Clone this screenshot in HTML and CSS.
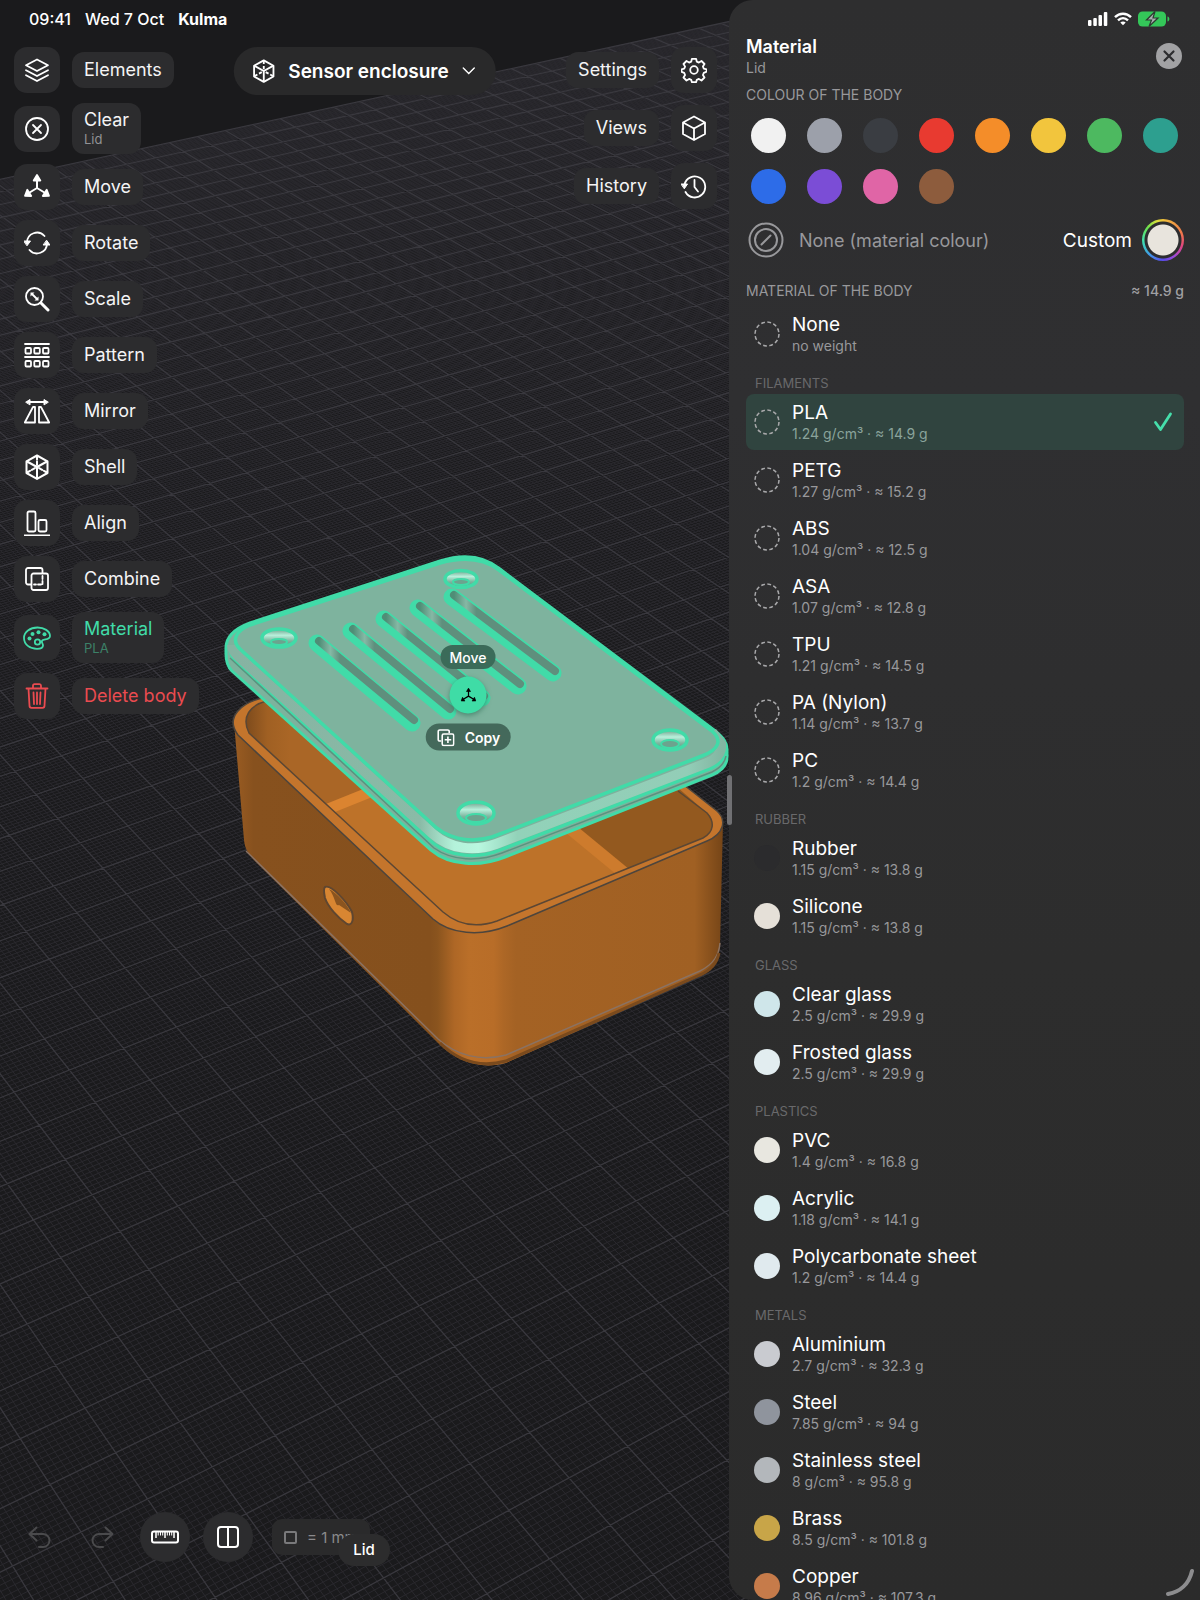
FILE: index.html
```html
<!DOCTYPE html>
<html lang="en">
<head>
<meta charset="utf-8">
<meta name="viewport" content="width=device-width, initial-scale=1">
<title>Kulma – Sensor enclosure</title>
<link rel="stylesheet" href="styles.css">
</head>
<body>
<svg class="defs" aria-hidden="true">
  <symbol id="i-move" viewBox="0 0 26 26"><path d="M13 14V5M13 14l-9 5.500M13 14l9 5.500" fill="none" stroke="currentColor" stroke-width="2"/><path d="M13 1l3.300 5.500H9.700zM1 21.800l2.300-6 3.900 6.200zM25 21.800l-2.300-6-3.900 6.200z" fill="currentColor" stroke="currentColor" stroke-linejoin="round"/></symbol>
  <symbol id="i-shell" viewBox="0 0 26 26"><g fill="none" stroke="currentColor" stroke-width="2" stroke-linejoin="round"><path d="M13 1.500l10.500 5.800v11.700L13 24.800 2.500 19V7.300z"/><path d="M13 13v11.500M13 13L3 7.500M13 13l10-5.500"/><path d="M13 2v11M3 18.500l10-5.500M23 18.500L13 13" stroke-dasharray="3.500 2"/></g></symbol>
</svg>

<div class="app">
  <svg class="scene" viewBox="0 0 1200 1600" preserveAspectRatio="xMinYMid slice" role="img" aria-label="Sensor enclosure with a lifted lid">
    <defs>
      <linearGradient id="body" gradientUnits="userSpaceOnUse" x1="234" y1="0" x2="724" y2="0">
        <stop offset="0" stop-color="#9a5c22"/><stop offset=".04" stop-color="#87511e"/><stop offset=".4" stop-color="#85501d"/><stop offset=".415" stop-color="#8a541e"/><stop offset=".45" stop-color="#ae6726"/><stop offset=".48" stop-color="#ba6f29"/><stop offset=".53" stop-color="#b86d28"/><stop offset=".55" stop-color="#ad6726"/><stop offset=".575" stop-color="#a46224"/><stop offset=".94" stop-color="#a06023"/><stop offset=".97" stop-color="#8a521d"/><stop offset="1" stop-color="#744417"/>
      </linearGradient>
      <linearGradient id="inner" gradientUnits="userSpaceOnUse" x1="245" y1="0" x2="290" y2="0">
        <stop offset="0" stop-color="#7c4a1c"/><stop offset=".5" stop-color="#a06023"/><stop offset="1" stop-color="#aa6626"/>
      </linearGradient>
      <linearGradient id="bevel" gradientUnits="userSpaceOnUse" x1="235" y1="0" x2="722" y2="0">
        <stop offset="0" stop-color="#86b3a2"/><stop offset=".38" stop-color="#8abba7"/><stop offset=".45" stop-color="#b4f2da"/><stop offset=".5" stop-color="#b9f7df"/><stop offset=".58" stop-color="#92d2b9"/><stop offset=".93" stop-color="#93cdb7"/><stop offset="1" stop-color="#83b6a2"/>
      </linearGradient>
      <linearGradient id="sink" x1="0" y1="0" x2="0" y2="1">
        <stop offset="0" stop-color="#6f9f8b"/><stop offset=".35" stop-color="#b8f0db"/><stop offset=".65" stop-color="#7fb7a1"/><stop offset="1" stop-color="#5c8f7b"/>
      </linearGradient>
      <linearGradient id="slot" x1="0" y1="0" x2="1" y2="0">
        <stop offset="0" stop-color="#4f8d76"/><stop offset=".12" stop-color="#86b8a5"/><stop offset=".22" stop-color="#5f8f7d"/><stop offset="1" stop-color="#5f8f7d"/>
      </linearGradient>
      <clipPath id="cavity"><path d="M267 701C250 705 241 717 249 733L443 912C458 925 477 928 497 921L703 838C714 832 715 822 707 813L640 755L440 700z"/></clipPath>
    </defs>
    <path id="gridMinor" class="grid-minor"/>
    <path id="gridMajor" class="grid-major"/>

    <path d="M234 722L244 840C245 849 248 853 254 860L438 1043C456 1061 480 1070 506 1063L700 976C714 970 719 960 720 946L723 822L480 760z" fill="url(#body)"/>
    <path d="M246 851L438 1039C456 1055 480 1062 506 1055L700 971C714 964 719 955 720 943" fill="none" stroke="#8b7262" stroke-width="1.500"/>
    <path d="M440 1043C458 1061 480 1068 506 1061L700 975C712 970 717 963 719 953" fill="none" stroke="#7a4a1d" stroke-width="3"/>
    <path d="M267 697C240 702 225 718 238 735L433 919C450 934 480 937 507 926L707 841C724 834 727 820 717 811L660 766L440 700z" fill="#c4752c" stroke="#4d453d" stroke-width="1.500"/>
    <g clip-path="url(#cavity)">
      <path d="M230 690h520v250H230z" fill="#bd7229"/>
      <path d="M230 690h300v40L322 814h-92z" fill="url(#inner)"/>
      <path d="M572 827L634 882L760 830V740H560z" fill="#93591f"/>
      <path d="M318 813L420 772" stroke="#db8430" stroke-width="11"/>
      <path d="M555 816L640 886" stroke="#cd7b2d" stroke-width="12"/>
    </g>
    <path d="M267 701C250 705 241 717 249 733L443 912C458 925 477 928 497 921L703 838C714 832 715 822 707 813L678 791" fill="none" stroke="#5b4734" stroke-width="1.500"/>
    <path d="M325 887C331 884 347 902 352 912C354 920 352 926 347 924C338 918 328 907 325 898C324 893 323 889 325 887z" fill="#d88632" stroke="#5f4630" stroke-width="2"/>
    <path d="M329 889C337 893 347 904 351 913L339 905C335 907 336 898 329 889z" fill="#8a541f"/>

    <path d="M226 648C226 637 234 629 250 623L440 561C462 554 483 555 500 569L714 730C724 738 727 743 727 749V757C727 765 722 771 712 775L505 857C480 867 450 866 431 850L232 671C227 666 226 660 226 654z" fill="#7db29d" stroke="#41dba8" stroke-width="3"/>
    <path d="M230 650C231 656 234 660 238 664L433 843C450 857 478 859 500 850L712 768C720 764 725 758 725 749" fill="none" stroke="#41dba8" stroke-width="3.500"/>
    <path d="M230 658L434 848C452 861 478 862 502 853L712 772C720 768 725 762 726 756" fill="none" stroke="#5a937f" stroke-width="1.500"/>
    <path d="M232 645C232 650 236 654 240 658L433 834C450 849 474 852 496 844L707 763C717 759 722 753 721 744L712 732" fill="none" stroke="url(#bevel)" stroke-width="10"/>
    <path d="M250 625C236 631 231 640 240 649L430 822C445 838 468 844 492 837L702 756C720 749 722 740 712 731L499 570C483 558 462 557 440 563z" fill="#7eb39e" stroke="#41dba8" stroke-width="3.500"/>
    <path d="M317 643L412 723M351 631L448 711M384 619L482 698M418 608L518 686M452 597L553 673" fill="none" stroke="#41dba8" stroke-width="17" stroke-linecap="round"/>
    <g fill="none" stroke="url(#slot)" stroke-width="8" stroke-linecap="round">
      <path d="M319 641L414 720"/><path d="M353 629L450 709"/><path d="M386 617L484 696"/><path d="M420 606L520 684"/><path d="M454 595L555 671"/>
    </g>
    <g stroke="#41dba8" fill="url(#sink)">
      <ellipse cx="279" cy="638" rx="17" ry="9" stroke-width="3.500"/><ellipse cx="461" cy="579" rx="16" ry="8.500" stroke-width="3.500"/><ellipse cx="670" cy="740" rx="17" ry="10" stroke-width="3.500"/><ellipse cx="476" cy="813" rx="18" ry="11" stroke-width="3.500"/>
      <g stroke-width="2" fill="#6ca38e"><ellipse cx="279" cy="642" rx="8" ry="3"/><ellipse cx="461" cy="582" rx="8" ry="3"/><ellipse cx="670" cy="744" rx="9" ry="4"/><ellipse cx="476" cy="818" rx="10" ry="4"/></g>
    </g>
  </svg>

  <header class="status">
    <div class="status-left"><time>09:41</time><span>Wed 7 Oct</span><strong>Kulma</strong></div>
    <div class="status-right">
      <svg width="20" height="14" viewBox="0 0 20 14" fill="#fff" aria-label="Signal"><rect x="0" y="8" width="3.500" height="6" rx="1"/><rect x="5.300" y="6" width="3.500" height="8" rx="1"/><rect x="10.500" y="3" width="3.500" height="11" rx="1"/><rect x="15.800" y="0" width="3.500" height="14" rx="1"/></svg>
      <svg width="18" height="14" viewBox="0 0 18 14" fill="none" stroke="#fff" stroke-width="2.400" aria-label="Wi-Fi"><path d="M1 5.200C5.500.6 12.500.6 17 5.200M4 8.300c3-2.900 7-2.900 10 0"/><path d="M6.300 10.500c1.500-1.400 3.900-1.400 5.400 0L9 13.300z" fill="#fff" stroke="none"/></svg>
      <svg width="32" height="16" viewBox="0 0 32 16" aria-label="Battery charging"><rect y="0.500" width="28" height="15" rx="4.500" fill="#34c759"/><path d="M29.500 5.500c2.500.5 2.500 4.500 0 5z" fill="#34c759"/><path d="M17 .5L8.500 9h5l-2.500 6.500L20 7h-5z" fill="#a9aeb0" stroke="#2c3a30" stroke-width="1.200"/></svg>
    </div>
  </header>

  <main class="stage">
    <nav class="tools" aria-label="Tools">
      <button class="tool"><span class="tile"><svg viewBox="0 0 26 26"><path d="M13 2.500l11 5.700-11 5.800L2 8.200zM2 13.200l11 5.800 11-5.800M2 18.200l11 5.800 11-5.800"/></svg></span><span class="chip">Elements</span></button>
      <button class="tool"><span class="tile"><svg viewBox="0 0 26 26"><circle cx="13" cy="13" r="11"/><path d="M9 9l8 8M17 9l-8 8"/></svg></span><span class="chip tall">Clear<small>Lid</small></span></button>
      <button class="tool"><span class="tile"><svg><use href="#i-move"/></svg></span><span class="chip">Move</span></button>
      <button class="tool"><span class="tile"><svg viewBox="0 0 26 26"><path d="M3 12.500A10 10 0 0 1 20.500 6M23 13.500A10 10 0 0 1 5.500 20"/><path d="M0 11h6.500L3.200 15.500zM19.500 15H26l-3.200-4.500z" fill="currentColor" stroke-width="1"/></svg></span><span class="chip">Rotate</span></button>
      <button class="tool"><span class="tile"><svg viewBox="0 0 26 26"><circle cx="10.500" cy="10.500" r="8.500"/><path d="M17 17l7 7" stroke-width="3"/><path d="M8 8l5 5"/><path d="M6.500 6.500h4l-4 4zM14.500 14.500h-4l4-4z" fill="currentColor" stroke="none"/></svg></span><span class="chip">Scale</span></button>
      <button class="tool"><span class="tile"><svg viewBox="0 0 26 26"><path d="M1 2h24M1 15h24"/><rect x="1.500" y="6" width="5.500" height="5.500" rx="1"/><rect x="10.300" y="6" width="5.500" height="5.500" rx="1"/><rect x="19" y="6" width="5.500" height="5.500" rx="1"/><rect x="1.500" y="19" width="5.500" height="5.500" rx="1"/><rect x="10.300" y="19" width="5.500" height="5.500" rx="1"/><rect x="19" y="19" width="5.500" height="5.500" rx="1"/></svg></span><span class="chip">Pattern</span></button>
      <button class="tool"><span class="tile"><svg viewBox="0 0 26 26"><path d="M11 9v15.500H.8L9 9zM15 9v15.500h10.200L17 9zM4 4h18"/><path d="M2 4l4-2.500v5zM24 4l-4-2.500v5z" fill="currentColor" stroke-width="1"/></svg></span><span class="chip">Mirror</span></button>
      <button class="tool"><span class="tile"><svg><use href="#i-shell"/></svg></span><span class="chip">Shell</span></button>
      <button class="tool"><span class="tile"><svg viewBox="0 0 26 26"><path d="M0 25.500h26"/><rect x="3.500" y="1.500" width="8" height="20" rx="1.500"/><rect x="14.500" y="10" width="8" height="11.500" rx="1.500"/></svg></span><span class="chip">Align</span></button>
      <button class="tool"><span class="tile"><svg viewBox="0 0 26 26"><path d="M7 18.500H4a2 2 0 0 1-2-2V4a2 2 0 0 1 2-2h12.500a2 2 0 0 1 2 2v3"/><rect x="7.500" y="7.500" width="16.500" height="16.500" rx="2"/><path d="M18.500 10v8.500H10" stroke-dasharray="3 2"/></svg></span><span class="chip">Combine</span></button>
      <button class="tool active" aria-pressed="true"><span class="tile"><svg class="wide" viewBox="0 0 28 26"><path d="M14.500 2.500C7 2.500 1 7 1 13c0 6.500 6 10.800 13 10.800 4 0 6-1.300 6-3.300 0-1.800-1.200-2.500-1.200-4 0-3.500 8.200-.5 8.200-5.500 0-5-6-8.500-12.500-8.500z"/><circle cx="14.500" cy="17" r="2.700"/><g fill="currentColor" stroke="none"><circle cx="6.500" cy="13.500" r="2"/><circle cx="9.500" cy="9" r="2"/><circle cx="15.500" cy="7.200" r="2"/><circle cx="21.500" cy="9.300" r="2"/></g></svg></span><span class="chip tall">Material<small>PLA</small></span></button>
      <button class="tool danger"><span class="tile"><svg viewBox="0 0 26 26"><path d="M2.500 5.500h21M9 5V2.800C9 1.800 9.500 1.200 10.500 1.200h5c1 0 1.500.6 1.500 1.600V5M4.500 5.500l1 17.300c0 1.200.8 2 2 2h11c1.200 0 2-.8 2-2l1-17.300M9.500 9.500l.5 11.500M13 9.500V21M16.500 9.500L16 21"/></svg></span><span class="chip">Delete body</span></button>
    </nav>

    <button class="document"><svg width="24" height="24"><use href="#i-shell"/></svg><span>Sensor enclosure</span><svg width="14" height="14" viewBox="0 0 14 14" fill="none" stroke="currentColor" stroke-width="1.400" stroke-linecap="round"><path d="M1.500 4l5.500 5.500L12.500 4"/></svg></button>

    <nav class="tools right" aria-label="Project">
      <button class="tool"><span class="chip">Settings</span><span class="tile"><svg viewBox="0 0 26 26"><circle cx="13" cy="13" r="3.800"/><path d="M10.900 1.800h4.200l.7 2.900 2.100.9 2.600-1.600 3 3-1.600 2.500.9 2.100 2.800.7v2.400l-2.800 1.200-.9 2.100 1.600 2.500-3 3-2.600-1.600-2.100.9-.7 2.400h-4.200l-.7-2.400-2.100-.9-2.600 1.600-3-3 1.600-2.500-.9-2.100L.6 14.900v-2.600l2.600-.6.9-2.100-1.600-2.600 3-3 2.600 1.600 2.100-.9z"/></svg></span></button>
      <button class="tool"><span class="chip">Views</span><span class="tile"><svg viewBox="0 0 26 26"><path d="M13 1.500l11 6v11.500l-11 6-11-6V7.500zM2.500 7.700L13 13.500l10.500-5.800M13 13.500V25"/></svg></span></button>
      <button class="tool"><span class="chip">History</span><span class="tile"><svg viewBox="0 0 26 26"><path d="M3.500 11.500A10.500 10.500 0 1 1 4.500 19M13.500 7v7l3.500 4.500"/><path d="M.3 11h6.200l-3 4.500z" fill="currentColor" stroke-width="1"/></svg></span></button>
    </nav>

    <span class="gizmo-tip">Move</span>
    <button class="gizmo" aria-label="Move body"><svg width="16" height="16"><use href="#i-move"/></svg></button>
    <button class="gizmo-copy"><svg width="18" height="18" viewBox="0 0 18 18" fill="none" stroke="currentColor" stroke-width="1.600"><path d="M4.500 12.500H3a1.500 1.500 0 0 1-1.500-1.500V3A1.500 1.500 0 0 1 3 1.500h8A1.500 1.500 0 0 1 12.500 3v1.500"/><rect x="5.500" y="5.500" width="11.500" height="11.500" rx="1.500"/><path d="M11.200 8v6.500M8 11.200h6.500"/></svg>Copy</button>

    <footer class="dock">
      <button class="ghost" aria-label="Undo" disabled><svg width="24" height="24" viewBox="0 0 24 24"><path d="M8.500 2.500L1.500 9l7 6.500M2 9h13a6.500 6.500 0 0 1 0 13h-4"/></svg></button>
      <button class="ghost" aria-label="Redo" disabled><svg width="24" height="24" viewBox="0 0 24 24"><path d="M15.500 2.500l7 6.500-7 6.500M22 9H9a6.500 6.500 0 0 0 0 13h4"/></svg></button>
      <button class="round" aria-label="Measure"><svg width="28" height="14" viewBox="0 0 28 14" fill="none" stroke="currentColor" stroke-width="2"><rect x="1" y="1.500" width="26" height="11" rx="2"/><path d="M5 2v6M14 2v6M23 2v6" stroke-width="1.500"/><path d="M7.200 2v3.500M9.500 2v3.500M11.700 2v3.500M16.300 2v3.500M18.500 2v3.500M20.700 2v3.500" stroke-width="1"/></svg></button>
      <button class="round" aria-label="Split view"><svg width="24" height="24" viewBox="0 0 24 24" fill="none" stroke="currentColor" stroke-width="2"><rect x="2" y="2" width="20" height="20" rx="3"/><path d="M12 2v20"/></svg></button>
      <div class="unit"><i></i><span>= 1 mm</span><b class="hover-name">Lid</b></div>
    </footer>
  </main>

  <aside class="panel" aria-label="Material">
    <span class="grip"></span>
    <div class="panel-head">
      <div><h1>Material</h1><p>Lid</p></div>
      <button class="close" aria-label="Close"><svg width="26" height="26" viewBox="0 0 26 26" fill="none" stroke="#2c2c2e" stroke-width="2.200" stroke-linecap="round"><path d="M8.500 8.500l9 9M17.500 8.500l-9 9"/></svg></button>
    </div>
    <h2>COLOUR OF THE BODY</h2>
    <div class="swatches" role="radiogroup" aria-label="Colour of the body">
      <input type="radio" name="colour" aria-label="White" class="c-white"><input type="radio" name="colour" aria-label="Grey" class="c-grey"><input type="radio" name="colour" aria-label="Graphite" class="c-graphite"><input type="radio" name="colour" aria-label="Red" class="c-red"><input type="radio" name="colour" aria-label="Orange" class="c-orange"><input type="radio" name="colour" aria-label="Yellow" class="c-yellow"><input type="radio" name="colour" aria-label="Green" class="c-green"><input type="radio" name="colour" aria-label="Teal" class="c-teal"><input type="radio" name="colour" aria-label="Blue" class="c-blue"><input type="radio" name="colour" aria-label="Violet" class="c-violet"><input type="radio" name="colour" aria-label="Pink" class="c-pink"><input type="radio" name="colour" aria-label="Brown" class="c-brown">
    </div>
    <div class="colour-row">
      <button class="no-colour"><svg width="36" height="36" viewBox="0 0 36 36" fill="none" stroke="currentColor" stroke-width="2"><circle cx="18" cy="18" r="16.500"/><circle cx="18" cy="18" r="11"/><path d="M13.500 22.500l9-9" stroke-linecap="round"/></svg>None (material colour)</button>
      <button class="custom">Custom<i></i></button>
    </div>
    <div class="section"><h2>MATERIAL OF THE BODY</h2><output>≈ 14.9 g</output></div>
    <div class="materials">
      <label class="mat"><input type="radio" name="mat"><span>None<small>no weight</small></span></label>
      <h3>FILAMENTS</h3>
      <label class="mat selected"><input type="radio" name="mat" checked><span>PLA<small>1.24 g/cm³ · ≈ 14.9 g</small></span><svg width="20" height="20" viewBox="0 0 20 20" fill="none" stroke="#46dfab" stroke-width="2.800" stroke-linecap="round" stroke-linejoin="round"><path d="M2.500 10.500l5 7L17.500 2"/></svg></label>
      <label class="mat"><input type="radio" name="mat"><span>PETG<small>1.27 g/cm³ · ≈ 15.2 g</small></span></label>
      <label class="mat"><input type="radio" name="mat"><span>ABS<small>1.04 g/cm³ · ≈ 12.5 g</small></span></label>
      <label class="mat"><input type="radio" name="mat"><span>ASA<small>1.07 g/cm³ · ≈ 12.8 g</small></span></label>
      <label class="mat"><input type="radio" name="mat"><span>TPU<small>1.21 g/cm³ · ≈ 14.5 g</small></span></label>
      <label class="mat"><input type="radio" name="mat"><span>PA (Nylon)<small>1.14 g/cm³ · ≈ 13.7 g</small></span></label>
      <label class="mat"><input type="radio" name="mat"><span>PC<small>1.2 g/cm³ · ≈ 14.4 g</small></span></label>
      <h3>RUBBER</h3>
      <label class="mat"><input type="radio" name="mat" class="m-rubber"><span>Rubber<small>1.15 g/cm³ · ≈ 13.8 g</small></span></label>
      <label class="mat"><input type="radio" name="mat" class="m-silicone"><span>Silicone<small>1.15 g/cm³ · ≈ 13.8 g</small></span></label>
      <h3>GLASS</h3>
      <label class="mat"><input type="radio" name="mat" class="m-glass"><span>Clear glass<small>2.5 g/cm³ · ≈ 29.9 g</small></span></label>
      <label class="mat"><input type="radio" name="mat" class="m-frosted"><span>Frosted glass<small>2.5 g/cm³ · ≈ 29.9 g</small></span></label>
      <h3>PLASTICS</h3>
      <label class="mat"><input type="radio" name="mat" class="m-pvc"><span>PVC<small>1.4 g/cm³ · ≈ 16.8 g</small></span></label>
      <label class="mat"><input type="radio" name="mat" class="m-acrylic"><span>Acrylic<small>1.18 g/cm³ · ≈ 14.1 g</small></span></label>
      <label class="mat"><input type="radio" name="mat" class="m-poly"><span>Polycarbonate sheet<small>1.2 g/cm³ · ≈ 14.4 g</small></span></label>
      <h3>METALS</h3>
      <label class="mat"><input type="radio" name="mat" class="m-aluminium"><span>Aluminium<small>2.7 g/cm³ · ≈ 32.3 g</small></span></label>
      <label class="mat"><input type="radio" name="mat" class="m-steel"><span>Steel<small>7.85 g/cm³ · ≈ 94 g</small></span></label>
      <label class="mat"><input type="radio" name="mat" class="m-stainless"><span>Stainless steel<small>8 g/cm³ · ≈ 95.8 g</small></span></label>
      <label class="mat"><input type="radio" name="mat" class="m-brass"><span>Brass<small>8.5 g/cm³ · ≈ 101.8 g</small></span></label>
      <label class="mat"><input type="radio" name="mat" class="m-copper"><span>Copper<small>8.96 g/cm³ · ≈ 107.3 g</small></span></label>
    </div>
    <svg class="resize" width="30" height="30" viewBox="0 0 30 30" fill="none" stroke="#8d8d8f" stroke-width="4" stroke-linecap="round" aria-hidden="true"><path d="M2 26C14 24 23 16 26 3"/></svg>
  </aside>
</div>
<script src="grid.js"></script>
</body>
</html>
```
FILE: styles.css
```css
* { box-sizing: border-box; }
body { margin: 0; background: #1a1a1c; color: #fff; font-family: Inter, "Liberation Sans", sans-serif; font-size: 18px; }
button { border: 0; padding: 0; margin: 0; background: none; color: inherit; font: inherit; cursor: pointer; }
h1, h2, h3, p { margin: 0; font-weight: 400; }
small { display: block; }
.defs { position: absolute; width: 0; height: 0; }

.app { position: relative; display: flex; height: 100vh; overflow: hidden; }
.scene { position: absolute; inset: 0; width: 100%; height: 100%; }
.grid-minor { fill: none; stroke: #2a292e; stroke-width: 1; }
.grid-major { fill: none; stroke: #39383e; stroke-width: 1.3; }

.status { position: absolute; inset: 0 0 auto 0; z-index: 3; display: flex; justify-content: space-between; align-items: center; height: 37px; padding: 0 30px 0 29px; font-size: 16px; pointer-events: none; }
.status-left { display: flex; gap: 14px; }
.status-left time, .status-left span { font-weight: 500; }
.status-right { display: flex; align-items: center; gap: 6px; }

.stage { position: relative; flex: 1; min-width: 0; display: flex; justify-content: space-between; align-items: flex-start; padding: 47px 12px 0 14px; }
.tools { display: flex; flex-direction: column; gap: 10px; align-items: flex-start; }
.tools.right { gap: 12px; align-items: flex-end; }
.tool { display: flex; align-items: center; gap: 12px; line-height: 22px; text-align: left; }
.tile { display: grid; place-items: center; width: 46px; height: 46px; border-radius: 13px; background: #2c2c2e; }
.tile svg { width: 26px; height: 26px; fill: none; stroke: currentColor; stroke-width: 1.8; stroke-linejoin: round; stroke-linecap: round; }
.tile svg.wide { width: 28px; }
.tile use { stroke: none; }
.chip { padding: 7px 12px; border-radius: 12px; background: #2c2c2e; color: #f4f4f5; }
.chip.tall { padding: 6px 12px 7px; }
.chip small { font-size: 13px; line-height: 16px; color: #929295; }
.active, .active .chip { color: #41dba8; }
.active .chip small { color: #3c8168; }
.danger, .danger .chip { color: #ea4b50; }

.document { position: absolute; left: 50%; transform: translateX(-50%); display: flex; align-items: center; gap: 13px; height: 48px; padding: 0 20px 0 18px; border-radius: 24px; background: #29292a; font-size: 19px; font-weight: 600; white-space: nowrap; }

.gizmo-tip, .gizmo, .gizmo-copy { position: absolute; transform: translate(-50%, -50%); left: 468px; display: flex; align-items: center; justify-content: center; border-radius: 20px; }
.gizmo-tip { top: 657px; height: 24px; padding: 0 9px; background: #3b6b59; font-size: 14px; font-weight: 500; }
.gizmo { top: 695px; width: 37px; height: 37px; background: #3fdca6; color: #000; box-shadow: 0 2px 5px #2b6a5499; }
.gizmo-copy { top: 737px; height: 27px; padding: 0 10px 0 11px; gap: 10px; background: #44695b; font-size: 14px; font-weight: 600; }

.dock { position: absolute; left: 28px; bottom: 38px; display: flex; align-items: center; }
.ghost { width: 24px; height: 24px; margin-right: 38px; color: #4a4a4c; }
.ghost svg { display: block; fill: none; stroke: currentColor; stroke-width: 2; stroke-linecap: round; stroke-linejoin: round; }
.ghost + .round { margin-left: -12px; }
.round { display: grid; place-items: center; width: 50px; height: 50px; margin-right: 13px; border-radius: 50%; background: #2c2c2e; }
.unit { position: relative; display: flex; align-items: center; gap: 10px; height: 36px; margin-left: 6px; padding: 0 12px; border-radius: 10px; background: #2a2a2b; color: #8a8a8c; font-size: 15px; }
.unit i { width: 13px; height: 13px; border: 2px solid #79797b; border-radius: 2px; }
.hover-name { position: absolute; right: -20px; top: 15px; padding: 0 15px; border-radius: 16px; background: #2c2c2d; color: #fff; font-size: 15px; font-weight: 500; line-height: 32px; }

.panel { position: relative; flex: 0 0 471px; display: flex; flex-direction: column; padding: 34px 16px 0 17px; border-radius: 24px 0 0 24px; background: linear-gradient(#2e2e2f, #2f2f31 25%, #2d2d2d 60%, #2b2b2b); }
.grip { position: absolute; left: -2px; top: calc(50% - 25px); width: 5px; height: 50px; border-radius: 3px; background: #707073; }
.panel-head { display: flex; justify-content: space-between; align-items: center; margin-bottom: 9px; }
h1 { font-size: 18px; font-weight: 600; line-height: 25px; }
.panel-head p { font-size: 14px; line-height: 18px; color: #98989b; }
.close { width: 26px; height: 26px; margin-right: 2px; border-radius: 50%; background: #a2a2a4; }
.close svg { display: block; }
h2 { font-size: 14px; line-height: 18px; color: #98989b; }
.swatches { display: grid; grid-template-columns: repeat(8, 35px); column-gap: 21px; row-gap: 16px; padding: 14px 5px 15px; }
input[type=radio] { appearance: none; margin: 0; border-radius: 50%; }
.swatches input { width: 35px; height: 35px; }
.c-white { background: #f1f1f1; } .c-grey { background: #9ca0aa; } .c-graphite { background: #3a3d42; } .c-red { background: #e83a30; }
.c-orange { background: #f48d29; } .c-yellow { background: #f2c53d; } .c-green { background: #4db960; } .c-teal { background: #2d9f8f; }
.c-blue { background: #2d6ce8; } .c-violet { background: #7b4dd6; } .c-pink { background: #e065a6; } .c-brown { background: #8d5c3d; }
.colour-row { display: flex; justify-content: space-between; align-items: center; }
.no-colour { display: flex; align-items: center; gap: 15px; padding-left: 2px; color: #98989b; }
.custom { display: flex; align-items: center; gap: 10px; font-size: 19px; }
.custom i { width: 42px; height: 42px; border-radius: 50%; background: radial-gradient(circle, #e8e4dd 15px, #2d2d2f 16px 18px, transparent 19px), conic-gradient(#f0c03c, #f0744c 20%, #e0457f 30%, #a04ad8 40%, #5a4ae8 50%, #3f9ae8 62%, #3fe0b0 74%, #6de04c 86%, #d8e03c 95%, #f0c03c); }
.section { display: flex; justify-content: space-between; margin-top: 21px; }
output { font-size: 14px; line-height: 18px; font-weight: 500; color: #a0a0a3; }
.materials { flex: 1; min-height: 0; overflow: hidden; display: flex; flex-direction: column; gap: 2px; margin-top: 6px; }
h3 { flex: none; height: 28px; padding: 10px 9px 0; font-size: 13px; line-height: 18px; color: #69696b; }
.mat { flex: none; display: flex; align-items: center; gap: 12px; height: 56px; padding: 0 9px 0 8px; border-radius: 8px; font-size: 19px; line-height: 24px; }
.mat span { flex: 1; }
.mat small { font-size: 14px; line-height: 18px; color: #98989b; }
.mat input { width: 26px; height: 26px; border: 0; }
.mat input:not([class]) { background: url("data:image/svg+xml,%3Csvg xmlns='http://www.w3.org/2000/svg' viewBox='0 0 26 26'%3E%3Ccircle cx='13' cy='13' r='12' fill='none' stroke='%23a8a8aa' stroke-width='1.600' stroke-dasharray='3.770 2.513'/%3E%3C/svg%3E"); }
.mat.selected { background: #30443f; }
.selected small { color: #8aa39b; }
.selected svg { margin-right: 2px; }
.m-rubber { background: #2b2b2d; } .m-silicone { background: #e5e0d8; } .m-glass { background: #cfe6ea; } .m-frosted { background: #e2edf0; }
.m-pvc { background: #e8e7e0; } .m-acrylic { background: #dcf0f2; } .m-poly { background: #e0eaee; } .m-aluminium { background: #c9cbd0; }
.m-steel { background: #8f949d; } .m-stainless { background: #b3b7bb; } .m-brass { background: #c8a548; } .m-copper { background: #c67b4a; }
.resize { position: absolute; right: 4px; bottom: 2px; }
```
FILE: grid.js
```js
// Ground grid: world units (i, j) are 10 mm cells, projected with a fixed camera.
const HORIZON = -896;
function project(i, j) {
  const w = 0.00041186 + 5.68e-6 * i - 8.23e-6 * j;
  return [(0.03336 + 0.02823 * i + 0.01233 * j) / w, HORIZON + 1 / w];
}
function segment(i0, j0, i1, j1) {
  const a = project(i0, j0), b = project(i1, j1);
  return `M${a[0].toFixed(2)} ${a[1].toFixed(2)}L${b[0].toFixed(2)} ${b[1].toFixed(2)}`;
}
const I0 = -10, I1 = 90, J0 = -49, J1 = 14;
let minor = '', major = '';
for (let n = I0 * 10; n <= I1 * 10; n++) {
  const s = segment(n / 10, J0, n / 10, J1);
  if (n % 10) minor += s; else major += s;
}
for (let n = J0 * 10; n <= J1 * 10; n++) {
  const s = segment(I0, n / 10, I1, n / 10);
  if (n % 10) minor += s; else major += s;
}
document.getElementById('gridMinor').setAttribute('d', minor);
document.getElementById('gridMajor').setAttribute('d', major);
```
